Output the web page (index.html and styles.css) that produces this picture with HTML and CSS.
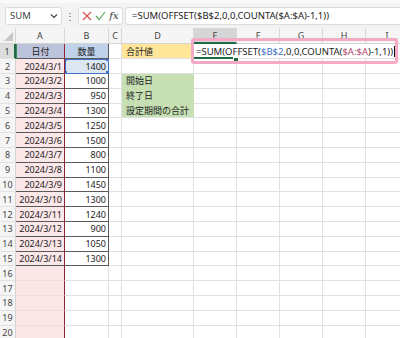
FILE: index.html
```html
<!DOCTYPE html>
<html>
<head>
    <title>Sheet</title>
    <link rel="stylesheet" href="styles.css">
</head>
<body>
    <div class="topbar">
        <div class="name-box">
            <span>SUM</span>
            <svg width="8" height="6" viewBox="0 0 8 6"><path d="M1 1.5 L4 4.5 L7 1.5" fill="none" stroke="#444" stroke-width="1.2"/></svg>
        </div>
        <span class="dots">⋮</span>
        <div class="fx-box">
            <svg width="10" height="10" viewBox="0 0 10 10"><path d="M1 1 L9 9 M9 1 L1 9" stroke="#d9534f" stroke-width="1.2"/></svg>
            <svg width="11" height="10" viewBox="0 0 11 10"><path d="M1 5 L4 8.5 L10 1" fill="none" stroke="#5cab5c" stroke-width="1.2"/></svg>
            <span class="fx">fx</span>
        </div>
        <div class="formula-input">=SUM(OFFSET($B$2,0,0,COUNTA($A:$A)-1,1))</div>
    </div>

    <div class="sheet">
        <div class="corner"></div>
        <div class="ch">A</div><div class="ch">B</div><div class="ch">C</div><div class="ch">D</div>
        <div class="ch active">E</div><div class="ch">F</div><div class="ch">G</div><div class="ch">H</div><div class="ch">I</div>

        <div class="rh active">1</div>
        <div class="c a head-a">日付</div><div class="c b head-b">数量</div><div class="c"></div>
        <div class="c yellow">合計値</div>
        <div class="c editing">
            <span class="ed-text">=SUM(OFFSET(<span class="ref-blue">$B$2</span>,0,0,COUNTA(<span class="ref-red">$A:$A</span>)-1,1))</span><span class="caret"></span>
            <span class="ed-line"></span>
        </div>

        <div class="rh">2</div>
        <div class="c a">2024/3/1</div><div class="c b b-sel">1400</div><div class="c"></div><div class="c"></div>
        <div class="c"></div><div class="c"></div><div class="c"></div><div class="c"></div><div class="c"></div>

        <div class="rh">3</div>
        <div class="c a">2024/3/2</div><div class="c b">1000</div><div class="c"></div><div class="c green">開始日</div>
        <div class="c"></div><div class="c"></div><div class="c"></div><div class="c"></div><div class="c"></div>

        <div class="rh">4</div>
        <div class="c a">2024/3/3</div><div class="c b">950</div><div class="c"></div><div class="c green">終了日</div>
        <div class="c"></div><div class="c"></div><div class="c"></div><div class="c"></div><div class="c"></div>

        <div class="rh">5</div>
        <div class="c a">2024/3/4</div><div class="c b">1300</div><div class="c"></div><div class="c green last">設定期間の合計</div>
        <div class="c"></div><div class="c"></div><div class="c"></div><div class="c"></div><div class="c"></div>

        <div class="rh">6</div>
        <div class="c a">2024/3/5</div><div class="c b">1250</div><div class="c"></div><div class="c"></div>
        <div class="c"></div><div class="c"></div><div class="c"></div><div class="c"></div><div class="c"></div>

        <div class="rh">7</div>
        <div class="c a">2024/3/6</div><div class="c b">1500</div><div class="c"></div><div class="c"></div>
        <div class="c"></div><div class="c"></div><div class="c"></div><div class="c"></div><div class="c"></div>

        <div class="rh">8</div>
        <div class="c a">2024/3/7</div><div class="c b">800</div><div class="c"></div><div class="c"></div>
        <div class="c"></div><div class="c"></div><div class="c"></div><div class="c"></div><div class="c"></div>

        <div class="rh">9</div>
        <div class="c a">2024/3/8</div><div class="c b">1100</div><div class="c"></div><div class="c"></div>
        <div class="c"></div><div class="c"></div><div class="c"></div><div class="c"></div><div class="c"></div>

        <div class="rh">10</div>
        <div class="c a">2024/3/9</div><div class="c b">1450</div><div class="c"></div><div class="c"></div>
        <div class="c"></div><div class="c"></div><div class="c"></div><div class="c"></div><div class="c"></div>

        <div class="rh">11</div>
        <div class="c a">2024/3/10</div><div class="c b">1300</div><div class="c"></div><div class="c"></div>
        <div class="c"></div><div class="c"></div><div class="c"></div><div class="c"></div><div class="c"></div>

        <div class="rh">12</div>
        <div class="c a">2024/3/11</div><div class="c b">1240</div><div class="c"></div><div class="c"></div>
        <div class="c"></div><div class="c"></div><div class="c"></div><div class="c"></div><div class="c"></div>

        <div class="rh">13</div>
        <div class="c a">2024/3/12</div><div class="c b">900</div><div class="c"></div><div class="c"></div>
        <div class="c"></div><div class="c"></div><div class="c"></div><div class="c"></div><div class="c"></div>

        <div class="rh">14</div>
        <div class="c a">2024/3/13</div><div class="c b">1050</div><div class="c"></div><div class="c"></div>
        <div class="c"></div><div class="c"></div><div class="c"></div><div class="c"></div><div class="c"></div>

        <div class="rh">15</div>
        <div class="c a">2024/3/14</div><div class="c b">1300</div><div class="c"></div><div class="c"></div>
        <div class="c"></div><div class="c"></div><div class="c"></div><div class="c"></div><div class="c"></div>

        <div class="rh">16</div>
        <div class="c a empty"></div><div class="c"></div><div class="c"></div><div class="c"></div>
        <div class="c"></div><div class="c"></div><div class="c"></div><div class="c"></div><div class="c"></div>

        <div class="rh">17</div>
        <div class="c a empty"></div><div class="c"></div><div class="c"></div><div class="c"></div>
        <div class="c"></div><div class="c"></div><div class="c"></div><div class="c"></div><div class="c"></div>

        <div class="rh">18</div>
        <div class="c a empty"></div><div class="c"></div><div class="c"></div><div class="c"></div>
        <div class="c"></div><div class="c"></div><div class="c"></div><div class="c"></div><div class="c"></div>

        <div class="rh">19</div>
        <div class="c a empty"></div><div class="c"></div><div class="c"></div><div class="c"></div>
        <div class="c"></div><div class="c"></div><div class="c"></div><div class="c"></div><div class="c"></div>

        <div class="rh">20</div>
        <div class="c a empty"></div><div class="c"></div><div class="c"></div><div class="c"></div>
        <div class="c"></div><div class="c"></div><div class="c"></div><div class="c"></div><div class="c"></div>
    </div>

    <div class="callout"></div>
</body>
</html>
```

FILE: styles.css
```css
body {
    margin: 0;
    width: 400px;
    height: 338px;
    overflow: hidden;
    position: relative;
    background: #fff;
    font-family: "Noto Sans", "Noto Sans CJK JP", sans-serif;
    color: #222;
}

/* formula bar */
.topbar {
    height: 25px;
    border-top: 3px solid #fafafa;
    background: #f3f3f3;
    display: flex;
    align-items: center;
}

.name-box {
    margin-left: 5px;
    width: 57px;
    height: 18px;
    box-sizing: border-box;
    background: #fff;
    border: 1px solid #dcdcdc;
    border-radius: 3px;
    display: flex;
    align-items: center;
    justify-content: space-between;
    padding: 0 3px 0 4px;
    font-size: 9.5px;
    color: #444;
}

.dots {
    width: 16px;
    text-align: center;
    font-size: 10px;
    color: #555;
}

.fx-box {
    width: 45px;
    height: 18px;
    box-sizing: border-box;
    background: #fff;
    border: 1px solid #dcdcdc;
    border-radius: 3px;
    display: flex;
    align-items: center;
    justify-content: space-around;
    padding: 0 2px;
}

.fx {
    font-family: "DejaVu Serif", serif;
    font-style: italic;
    font-size: 10px;
    color: #333;
}

.formula-input {
    margin-left: 2px;
    flex: 1;
    height: 18px;
    box-sizing: border-box;
    background: #fff;
    border: 1px solid #dcdcdc;
    border-right: none;
    border-radius: 3px 0 0 3px;
    padding-left: 6px;
    font-size: 9.5px;
    line-height: 16px;
    color: #222;
}

/* grid */
.sheet {
    display: grid;
    grid-template-columns: 16px 49px 44px 13px 72px 43px 43px 43px 43px 43px;
    grid-template-rows: 16.4px repeat(20, 14.8px);
    font-size: 9px;
}

.corner {
    background: #f3f3f3;
    border-right: 1px solid #d4d4d4;
    border-bottom: 1px solid #d4d4d4;
    position: relative;
}

.corner::after {
    content: "";
    position: absolute;
    right: 2px;
    bottom: 2px;
    border-left: 9px solid transparent;
    border-bottom: 9px solid #c8c8c8;
}

.ch {
    background: #f5f5f5;
    border-right: 1px solid #d8d8d8;
    border-bottom: 1px solid #d4d4d4;
    display: flex;
    align-items: center;
    justify-content: center;
    color: #444;
    font-size: 9px;
}

.ch.active {
    background: #d6d6d6;
    border-bottom: 2px solid #1e6b41;
}

.rh {
    background: #f5f5f5;
    border-right: 1px solid #d4d4d4;
    border-bottom: 1px solid #e2e2e2;
    display: flex;
    align-items: center;
    justify-content: center;
    color: #444;
    font-size: 9px;
}

.rh.active {
    background: #dcdcdc;
    border-right: 2px solid #1e6b41;
}

.c {
    box-sizing: border-box;
    border-right: 1px solid #e1e1e1;
    border-bottom: 1px solid #e1e1e1;
    display: flex;
    align-items: center;
    padding: 0 2px;
    white-space: nowrap;
    overflow: hidden;
}

.a {
    background: #fbe6e8;
    border-bottom: 1px solid #5a5a5a;
    border-right: 1px solid #8f2438;
    justify-content: flex-end;
}

.a.empty {
    border-bottom: 1px solid #f3dadc;
}

.b {
    border-bottom: 1px solid #5a5a5a;
    border-right: 1px solid #5a5a5a;
    justify-content: flex-end;
}

.head-a {
    background: #bcc4db;
    justify-content: center;
    border-left: 1px solid #3c8a5a;
}

.head-b {
    background: #bfd2ea;
    justify-content: center;
}

.b-sel {
    background: #dde7f3;
    outline: 1px solid #3f74c8;
    outline-offset: -1px;
    position: relative;
}

.b-sel::before,
.b-sel::after {
    content: "";
    position: absolute;
    left: -1px;
    width: 3px;
    height: 3px;
    background: #3f74c8;
    box-shadow: 42px 0 0 #3f74c8;
}

.b-sel::before {
    top: -1px;
}

.b-sel::after {
    bottom: -1px;
}

.yellow {
    background: #ffe699;
    padding-left: 4px;
}

.green {
    background: #c6e0b4;
    border-bottom-color: #c6e0b4;
    border-right-color: #c6e0b4;
    padding-left: 4px;
}

.green.last {
    border-bottom-color: #e1e1e1;
}

.editing {
    grid-column: 6 / span 5;
    background: #fff;
    position: relative;
    overflow: visible;
    padding-left: 2px;
    font-size: 9.5px;
}

.ref-blue {
    color: #3e70c6;
}

.ref-red {
    color: #b2476e;
}

.caret {
    display: inline-block;
    width: 1px;
    height: 11px;
    background: #111;
    margin-left: 1px;
}

.ed-line {
    position: absolute;
    left: 0;
    bottom: -1px;
    width: 43px;
    height: 2px;
    background: #1e6b41;
}

.ed-line::after {
    content: "";
    position: absolute;
    right: -2px;
    top: 0;
    width: 4px;
    height: 4px;
    background: #1e6b41;
    border: 1px solid #fff;
}

/* pink highlight box over the formula cell */
.callout {
    position: absolute;
    left: 191px;
    top: 38px;
    width: 207px;
    height: 26px;
    box-sizing: border-box;
    border: 3px solid #f4a9c6;
    border-radius: 3px;
}
```
